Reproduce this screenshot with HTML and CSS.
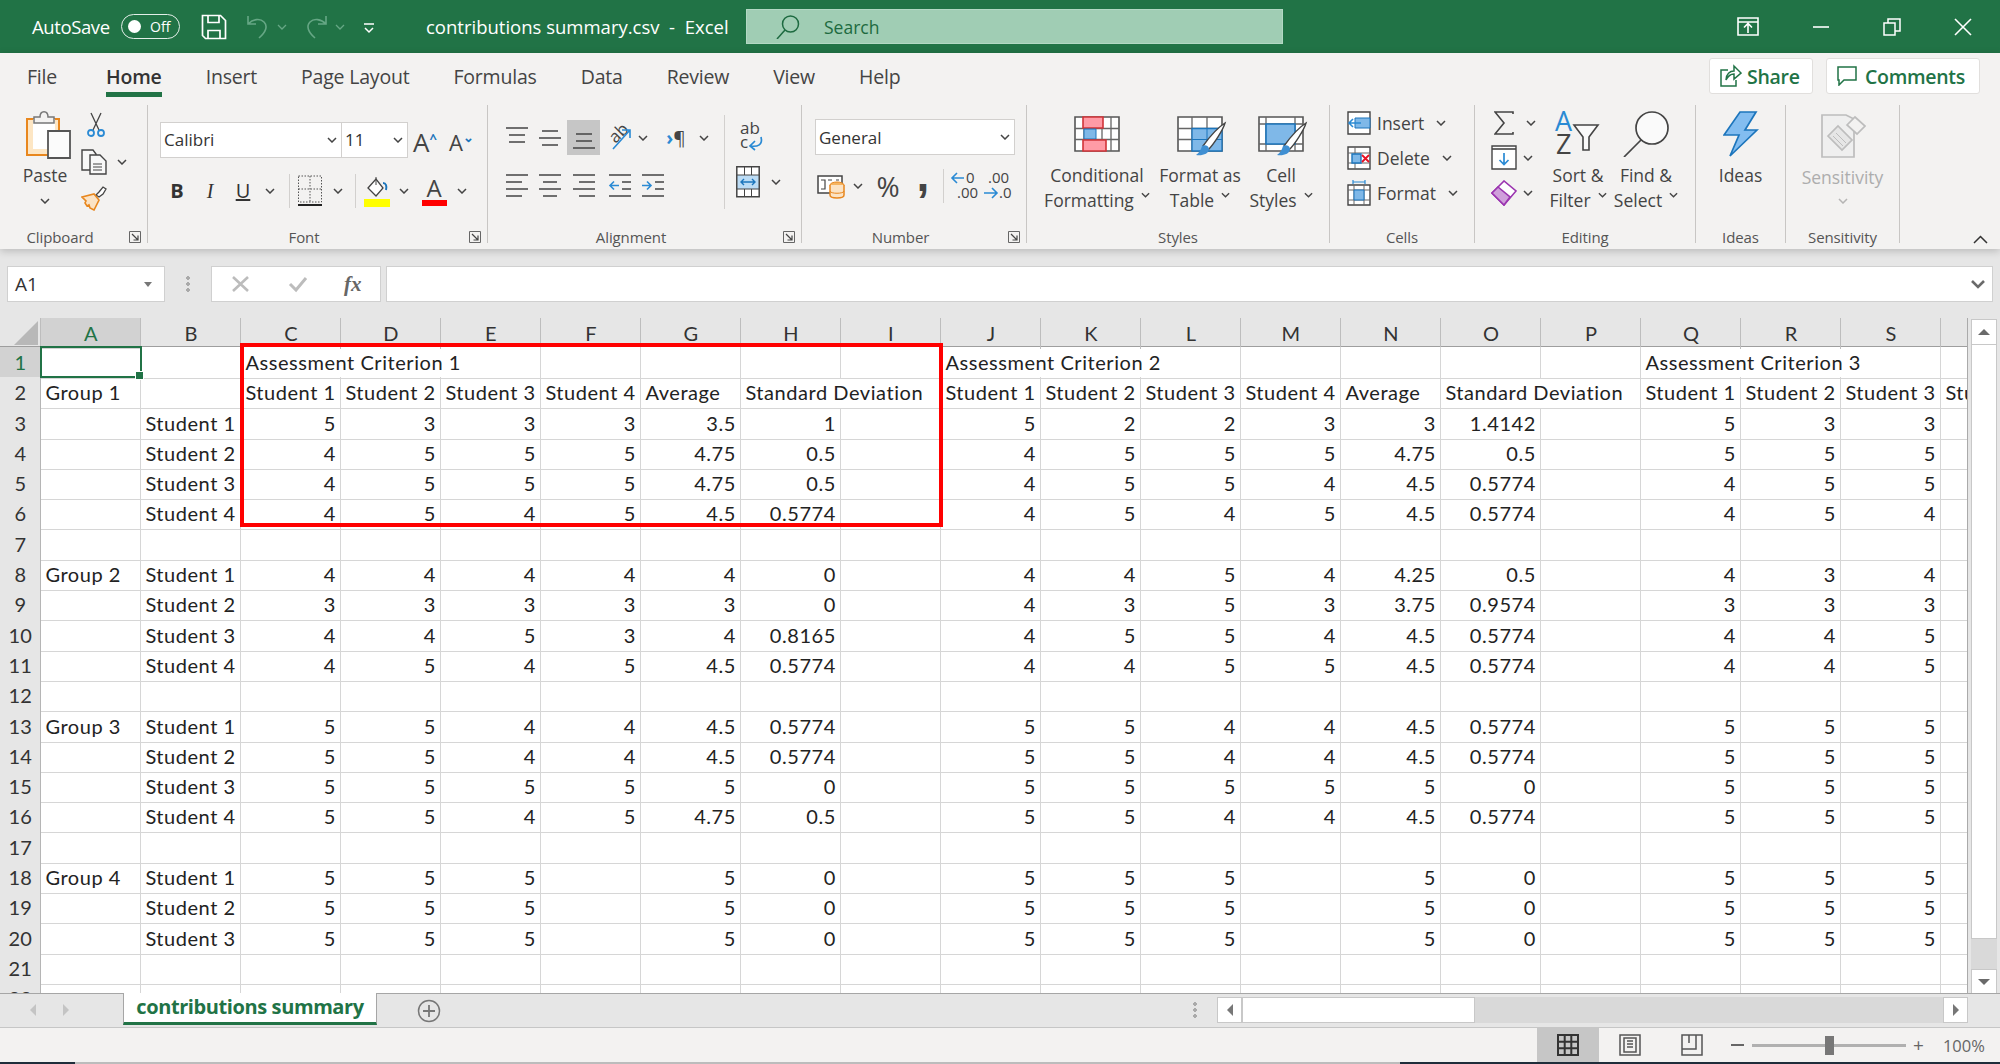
FILE: index.html
```html
<!DOCTYPE html>
<html lang="en">
<head>
<meta charset="utf-8">
<title>contributions summary.csv - Excel</title>
<link rel="stylesheet" href="styles.css">
</head>
<body>
<svg class="defs" width="0" height="0" aria-hidden="true">
  <symbol id="chev" viewBox="0 0 10 6"><path d="M1 1l4 4 4-4" fill="none" stroke="#444" stroke-width="1.5"/></symbol>
  <symbol id="launch" viewBox="0 0 12 12"><path d="M.5.5h11v11h-11z" fill="none" stroke="#666"/><path d="M3 3l6 6M9 4.5V9H4.5" fill="none" stroke="#444" stroke-width="1.2"/></symbol>
  <symbol id="brush" viewBox="0 0 46 46"><path d="M44 12c-2 7-11 21-17 27l-5-4c5-7 14-18 22-23z" fill="#fff" stroke="#444" stroke-width="1.4"/><path d="M15 44c6 1 13-1 13-6 0-3-4-5-7-3-1 4-3 7-6 9z" fill="#3f8fd2"/></symbol>
</svg>

<header class="titlebar">
  <span class="autosave">AutoSave</span>
  <span class="toggle"><i class="toggle-dot"></i><span>Off</span></span>
  <svg class="save" width="26" height="26" viewBox="0 0 26 26" fill="none" stroke="#fff" stroke-width="1.7"><path d="M1.500 1.500h18l5 5v18h-20l-3-3z"/><path d="M7 1.500v7h11v-7M7 24.500v-8h12v8"/></svg>
  <svg class="undo" width="24" height="24" viewBox="0 0 24 24" fill="none" stroke="#66a785" stroke-width="1.6"><path d="M2 1v8h8M2 9c5-5 12-6 16-2s2 10-5 16"/></svg>
  <svg class="tchev" width="10" height="6"><path d="M1 1l4 4 4-4" fill="none" stroke="#66a785" stroke-width="1.3"/></svg>
  <svg class="redo" width="24" height="24" viewBox="0 0 24 24" fill="none" stroke="#66a785" stroke-width="1.6"><path d="M22 1v8h-8M22 9c-5-5-12-6-16-2s-2 10 5 16"/></svg>
  <svg class="tchev" width="10" height="6"><path d="M1 1l4 4 4-4" fill="none" stroke="#66a785" stroke-width="1.3"/></svg>
  <svg class="qat" width="12" height="12" viewBox="0 0 12 12" fill="none" stroke="#fff" stroke-width="1.5"><path d="M1 2h10M2 6l4 4 4-4"/></svg>
  <span class="doc">contributions summary.csv&nbsp; - &nbsp;Excel</span>
  <div class="search">
    <svg width="24" height="24" viewBox="0 0 24 24" fill="none" stroke="#1d6a40" stroke-width="1.5"><circle cx="14.500" cy="9" r="8"/><path d="M9 15L1 24"/></svg>
    <span>Search</span>
  </div>
  <div class="winctl">
    <svg width="22" height="20" viewBox="0 0 22 20" fill="none" stroke="#fff" stroke-width="1.6"><path d="M1 1h20v17H1zM1 5h20M11 16V7M7 10.500l4-4 4 4"/></svg>
    <svg width="18" height="20" viewBox="0 0 18 20" fill="none" stroke="#fff" stroke-width="1.6"><path d="M1 10h16"/></svg>
    <svg width="18" height="20" viewBox="0 0 18 20" fill="none" stroke="#fff" stroke-width="1.5"><path d="M1 6h11v12H1zM5 6V2h12v12h-5"/></svg>
    <svg width="18" height="20" viewBox="0 0 18 20" fill="none" stroke="#fff" stroke-width="1.6"><path d="M1 2l16 16M17 2L1 18"/></svg>
  </div>
</header>

<div class="ribbon">
  <nav class="tabs">
    <span class="tab tab-file">File</span>
    <span class="tab active">Home</span>
    <span class="tab">Insert</span>
    <span class="tab">Page Layout</span>
    <span class="tab">Formulas</span>
    <span class="tab">Data</span>
    <span class="tab">Review</span>
    <span class="tab">View</span>
    <span class="tab">Help</span>
    <div class="actions">
      <button class="act">
        <svg width="22" height="24" viewBox="0 0 22 24" fill="none" stroke="#217346" stroke-width="1.5"><path d="M8 6H1v16h15v-6"/><path d="M6 16c0-6 4-9 8-9V2l7 7-7 6v-5c-4 0-6 2-8 6z"/></svg>
        <span>Share</span>
      </button>
      <button class="act">
        <svg width="20" height="20" viewBox="0 0 20 20" fill="none" stroke="#217346" stroke-width="1.5"><path d="M1 1h18v13H7l-5 5v-5H1z"/></svg>
        <span>Comments</span>
      </button>
    </div>
  </nav>

  <div class="groups">
    <section class="group g-clip">
      <div class="g-body clip-body">
        <div class="paste">
          <svg width="46" height="50" viewBox="0 0 46 50"><path d="M2 9h32v36H2z" fill="#fde6c4" stroke="#e8871e" stroke-width="2"/><path d="M8 9h22v30H8z" fill="#fff"/><path d="M9 13V7h6c0-7 8-7 8 0h6v6z" fill="#f3f2f1" stroke="#777" stroke-width="1.5"/><path d="M23 21h22v27H23z" fill="#fbfbfb" stroke="#555" stroke-width="1.8"/></svg>
          <span>Paste</span>
          <svg class="chev"><use href="#chev"/></svg>
        </div>
        <div class="clip-tools">
          <svg class="cut" width="18" height="26" viewBox="0 0 18 26" fill="none"><path d="M4 1l8 17M14 1L6 18" stroke="#444" stroke-width="1.3"/><circle cx="4" cy="21" r="3" stroke="#2a8ad4" stroke-width="1.8"/><circle cx="14" cy="21" r="3" stroke="#2a8ad4" stroke-width="1.8"/></svg>
          <div class="copy-row">
            <svg width="26" height="26" viewBox="0 0 26 26" fill="#f8f8f8" stroke="#444" stroke-width="1.4"><path d="M1 1h11l3 4v16H1z"/><path d="M9 6h10l6 6v13H9z"/><path d="M12 15h9M12 18h9M12 21h9" stroke-width="1"/></svg>
            <svg class="chev"><use href="#chev"/></svg>
          </div>
          <svg class="painter" width="26" height="25" viewBox="0 0 26 25"><path d="M15 9l3-3 4-5 3 2-3 5-4 3z" fill="#fff" stroke="#444" stroke-width="1.3"/><path d="M1 11l12-3 5 6-5 10-4-2-1-3-2 1-2-3 1-2z" fill="#fbe3c5" stroke="#e8871e" stroke-width="1.6"/></svg>
        </div>
      </div>
      <div class="g-label"><span>Clipboard</span><svg class="launch"><use href="#launch"/></svg></div>
    </section>

    <section class="group g-font">
      <div class="g-body font-body">
        <div class="font-top">
          <div class="combo combo-name"><span>Calibri</span><svg class="chev"><use href="#chev"/></svg></div>
          <div class="combo combo-size"><span>11</span><svg class="chev"><use href="#chev"/></svg></div>
          <span class="grow">A<small>^</small></span>
          <span class="shrink">A<small>⌄</small></span>
        </div>
        <div class="font-row2">
          <b class="fmt">B</b>
          <i class="fmt fmt-i">I</i>
          <u class="fmt">U</u>
          <svg class="chev"><use href="#chev"/></svg>
          <span class="vline"></span>
          <svg width="24" height="32" viewBox="0 0 24 32" fill="none" stroke="#555" stroke-dasharray="1.5 1.5"><path d="M.5 1h23v26h-23zM12 1v26M.5 14h23"/><path d="M0 30h24" stroke="#222" stroke-width="2" stroke-dasharray="none"/></svg>
          <svg class="chev"><use href="#chev"/></svg>
          <span class="vline"></span>
          <svg width="26" height="34" viewBox="0 0 26 34"><path d="M4 14L12 5l7 9-7 8z" fill="#fff" stroke="#444" stroke-width="1.3"/><path d="M12 3v8" stroke="#444"/><path d="M19 9c3 0 4 3 3 7" fill="none" stroke="#1c75bc" stroke-width="2"/><path d="M0 25h26v8H0z" fill="#ffff00"/></svg>
          <svg class="chev"><use href="#chev"/></svg>
          <span class="fontcolor">A</span>
          <svg class="chev"><use href="#chev"/></svg>
        </div>
      </div>
      <div class="g-label"><span>Font</span><svg class="launch"><use href="#launch"/></svg></div>
    </section>

    <section class="group g-align">
      <div class="g-body align-body">
        <div class="al-left">
          <div class="al-row1">
            <svg class="al" width="24" height="24" viewBox="0 0 24 24" stroke="#444" stroke-width="1.6"><path d="M1 2h22M4 9h16M4 16h16"/></svg>
            <svg class="al" width="24" height="24" viewBox="0 0 24 24" stroke="#444" stroke-width="1.6"><path d="M4 5h16M1 12h22M4 19h16"/></svg>
            <span class="al-active"><svg width="24" height="24" viewBox="0 0 24 24" stroke="#444" stroke-width="1.6"><path d="M4 8h16M4 15h16M1 22h22"/></svg></span>
            <svg width="28" height="26" viewBox="0 0 28 26" overflow="visible"><text x="0" y="13" class="ic-text ic-rot">ab</text><path d="M8 24L25 5M17 5h8v8" fill="none" stroke="#2a8ad4" stroke-width="1.6"/></svg>
            <svg class="chev"><use href="#chev"/></svg>
            <i></i>
            <span class="rtl"><em>›</em>¶</span>
            <svg class="chev"><use href="#chev"/></svg>
          </div>
          <div class="al-row2">
            <svg width="24" height="28" viewBox="0 0 24 28" stroke="#444" stroke-width="1.6"><path d="M1 3h22M1 10h16M1 17h22M1 24h16"/></svg>
            <svg width="24" height="28" viewBox="0 0 24 28" stroke="#444" stroke-width="1.6"><path d="M1 3h22M5 10h14M1 17h22M5 24h14"/></svg>
            <svg width="24" height="28" viewBox="0 0 24 28" stroke="#444" stroke-width="1.6"><path d="M1 3h22M7 10h16M1 17h22M7 24h16"/></svg>
            <svg width="24" height="28" viewBox="0 0 24 28" fill="none" stroke="#444" stroke-width="1.6"><path d="M1 3h22M14 10h9M14 17h9M1 24h22"/><path d="M11 13.500H2M6 9.500l-4 4 4 4" stroke="#2a8ad4"/></svg>
            <svg width="24" height="28" viewBox="0 0 24 28" fill="none" stroke="#444" stroke-width="1.6"><path d="M1 3h22M14 10h9M14 17h9M1 24h22"/><path d="M1 13.500h9M6 9.500l4 4-4 4" stroke="#2a8ad4"/></svg>
          </div>
        </div>
        <span class="vline vline-tall"></span>
        <div class="al-right">
          <svg class="wrap" width="26" height="34" viewBox="0 0 26 34" overflow="visible"><text x="2" y="14" class="ic-text">ab</text><text x="2" y="28" class="ic-text">c</text><path d="M23 17c2 8-3 10-11 9M17 21l-5 5 5 4" fill="none" stroke="#2a8ad4" stroke-width="1.7"/></svg>
          <div class="merge">
            <svg width="24" height="32" viewBox="0 0 24 32"><path d="M.8.8h22.400v30H.8z" fill="#fff" stroke="#444" stroke-width="1.5"/><path d="M1 9h22v14H1z" fill="#bcdcf5" stroke="#444" stroke-width="1"/><path d="M5 16h14M8 13l-3 3 3 3M16 13l3 3-3 3" fill="none" stroke="#1c75bc" stroke-width="1.4"/><path d="M8.500 1v8M15.500 1v8M8.500 23v8M15.500 23v8" stroke="#444"/></svg>
            <svg class="chev"><use href="#chev"/></svg>
          </div>
        </div>
      </div>
      <div class="g-label"><span>Alignment</span><svg class="launch"><use href="#launch"/></svg></div>
    </section>

    <section class="group g-num">
      <div class="g-body num-body">
        <div class="combo combo-gen"><span>General</span><svg class="chev"><use href="#chev"/></svg></div>
        <div class="num-row2">
          <svg width="28" height="26" viewBox="0 0 28 26"><path d="M1 3h24v17H1z" fill="#fff" stroke="#444" stroke-width="1.5"/><path d="M4 7h4v9H4M11 7h4M19 7h3" fill="none" stroke="#444" stroke-width="1.2"/><ellipse cx="20" cy="12" rx="7" ry="3" fill="#f5b461" stroke="#e8871e"/><path d="M13 12v10c0 4 14 4 14 0V12" fill="#fbe3c5" stroke="#e8871e" stroke-width="1.5"/><path d="M13 18c0 3 14 3 14 0" fill="none" stroke="#e8871e"/></svg>
          <svg class="chev"><use href="#chev"/></svg>
          <span class="pct">%</span>
          <span class="comma">,</span>
          <span class="vline"></span>
          <svg width="26" height="30" viewBox="0 0 26 30" overflow="visible"><text x="15" y="12" class="ic-num">0</text><text x="6" y="27" class="ic-num">.00</text><path d="M13 7H1M6 2L1 7l5 5" fill="none" stroke="#2a8ad4" stroke-width="1.6"/></svg>
          <svg width="28" height="30" viewBox="0 0 28 30" overflow="visible"><text x="5" y="12" class="ic-num">.00</text><text x="16" y="27" class="ic-num">.0</text><path d="M1 22h12M9 17l5 5-5 5" fill="none" stroke="#2a8ad4" stroke-width="1.6"/></svg>
        </div>
      </div>
      <div class="g-label"><span>Number</span><svg class="launch"><use href="#launch"/></svg></div>
    </section>

    <section class="group g-styles">
      <div class="g-body styles-body">
        <div class="big b-cond">
          <svg width="46" height="46" viewBox="0 0 46 46"><path d="M1 6h44v34H1z" fill="#fff" stroke="#555" stroke-width="1.6"/><path d="M10 6v34M28 6v34M37 6v34M1 17.500h44M1 28.500h44" stroke="#666" stroke-width="1.3"/><path d="M9 6h20v11H9z" fill="#ff9ba6" stroke="#d13438" stroke-width="1.6"/><path d="M10 18h12v10H10z" fill="#7fb8e8" stroke="#1c75bc"/><path d="M9 29h23v11H9z" fill="#ff9ba6" stroke="#d13438" stroke-width="1.6"/></svg>
          <span>Conditional</span>
          <span>Formatting<svg class="chev chev-s"><use href="#chev"/></svg></span>
        </div>
        <div class="big b-table">
          <svg class="ic-shift" width="50" height="46" viewBox="0 0 50 46"><path d="M1 6h44v34H1z" fill="#fff" stroke="#555" stroke-width="1.6"/><path d="M15 6v34M30 6v34M1 17.500h44M1 28.500h44" stroke="#666" stroke-width="1.3"/><path d="M15 17.500h30V40H15z" fill="#7fb8e8" stroke="#1c75bc" stroke-width="1.3"/><path d="M30 17.500V40M15 28.500h30" stroke="#1c75bc"/><use href="#brush" x="4" width="46" height="46"/></svg>
          <span>Format as</span>
          <span>Table<svg class="chev chev-s"><use href="#chev"/></svg></span>
        </div>
        <div class="big b-cell">
          <svg class="ic-shift" width="50" height="46" viewBox="0 0 50 46"><path d="M1 6h44v34H1z" fill="#fff" stroke="#555" stroke-width="1.6"/><path d="M8 6v34M37 6v34M1 13h44M1 33h44" stroke="#666" stroke-width="1.3"/><path d="M8 13h29v20H8z" fill="#7fb8e8" stroke="#1c75bc" stroke-width="1.6"/><use href="#brush" x="4" width="46" height="46"/></svg>
          <span>Cell</span>
          <span>Styles<svg class="chev chev-s"><use href="#chev"/></svg></span>
        </div>
      </div>
      <div class="g-label g-label-plain"><span>Styles</span></div>
    </section>

    <section class="group g-cells">
      <div class="g-body cells-body">
        <div class="cellrow">
          <svg width="24" height="24" viewBox="0 0 24 24"><path d="M1 1h22v22H1z" fill="#fff" stroke="#444" stroke-width="1.4"/><path d="M8 7h15v10H8z" fill="#7fb8e8" stroke="#1c75bc"/><path d="M14 12H2M6 8l-4 4 4 4" fill="none" stroke="#2a8ad4" stroke-width="1.6"/></svg>
          <span>Insert</span><svg class="chev"><use href="#chev"/></svg>
        </div>
        <div class="cellrow">
          <svg width="24" height="24" viewBox="0 0 24 24"><path d="M1 1h22v22H1z" fill="#fff" stroke="#444" stroke-width="1.4"/><path d="M1 7h22M1 17h22M8 1v22" stroke="#666"/><path d="M5 8h9v9H5z" fill="#7fb8e8" stroke="#1c75bc" stroke-width="1.4"/><path d="M15 9l7 7M22 9l-7 7" stroke="#e81123" stroke-width="1.8"/></svg>
          <span>Delete</span><svg class="chev"><use href="#chev"/></svg>
        </div>
        <div class="cellrow">
          <svg width="24" height="26" viewBox="0 0 24 26"><path d="M1 5h22v20H1z" fill="#fff" stroke="#444" stroke-width="1.4"/><path d="M1 10h22M1 20h22M7 5v20M17 5v20" stroke="#666"/><path d="M7 10h10v10H7z" fill="#7fb8e8" stroke="#1c75bc"/><path d="M6 2h12M6 0v4M18 0v4" stroke="#2a8ad4" stroke-width="1.2"/></svg>
          <span>Format</span><svg class="chev"><use href="#chev"/></svg>
        </div>
      </div>
      <div class="g-label g-label-plain"><span>Cells</span></div>
    </section>

    <section class="group g-edit">
      <div class="g-body edit-body">
        <div class="edit-tools">
          <div class="editrow er-sum">
            <svg width="20" height="24" viewBox="0 0 20 24" fill="none" stroke="#444" stroke-width="1.6"><path d="M19 3V1H1l9 11-9 11h18v-2"/></svg>
            <svg class="chev"><use href="#chev"/></svg>
          </div>
          <div class="editrow">
            <svg width="26" height="25" viewBox="0 0 26 25"><path d="M1 1h24v23H1z" fill="#fff" stroke="#444" stroke-width="1.4"/><path d="M1 4h24" stroke="#444" stroke-width="1.6"/><path d="M13 8v11M8.500 15l4.500 4.500 4.500-4.500" fill="none" stroke="#2a8ad4" stroke-width="1.7"/></svg>
            <svg class="chev"><use href="#chev"/></svg>
          </div>
          <div class="editrow">
            <svg width="26" height="26" viewBox="0 0 26 26"><path d="M1 13L13 1l12 10L13 25z" fill="#fff" stroke="#9b35b0" stroke-width="1.6"/><path d="M1 13l6-6 12 10-6 8z" fill="#cf9fdb" stroke="#9b35b0" stroke-width="1.6"/></svg>
            <svg class="chev"><use href="#chev"/></svg>
          </div>
        </div>
        <div class="big b-sort">
          <svg width="46" height="46" viewBox="0 0 46 46" overflow="visible"><text x="0" y="20" class="ic-az ic-blue">A</text><text x="1" y="43" class="ic-az">Z</text><path d="M19 14h24l-9 12v13h-6V26z" fill="#fafafa" stroke="#444" stroke-width="1.6"/></svg>
          <span>Sort &amp;</span>
          <span>Filter<svg class="chev chev-s"><use href="#chev"/></svg></span>
        </div>
        <div class="big b-find">
          <svg width="46" height="46" viewBox="0 0 46 46"><circle cx="29" cy="17" r="16" fill="#fafafa" stroke="#444" stroke-width="1.7"/><path d="M18 29L1 46" stroke="#444" stroke-width="1.7"/></svg>
          <span>Find &amp;</span>
          <span>Select<svg class="chev chev-s"><use href="#chev"/></svg></span>
        </div>
      </div>
      <div class="g-label g-label-plain"><span>Editing</span></div>
    </section>

    <section class="group g-ideas">
      <div class="g-body">
        <div class="big">
          <svg width="36" height="46" viewBox="0 0 36 46"><path d="M17 1h16L22 19h12L7 45l9-21H1z" fill="#83bdf0" stroke="#1c75bc" stroke-width="1.7"/></svg>
          <span>Ideas</span>
        </div>
      </div>
      <div class="g-label g-label-plain"><span>Ideas</span></div>
    </section>

    <section class="group g-sens">
      <div class="g-body">
        <div class="big big-off">
          <svg width="46" height="48" viewBox="0 0 46 48" fill="#e6e6e6" stroke="#bdbdbd" stroke-width="1.7"><path d="M2 4h24l8 4v38H2z" fill="#efefef"/><path d="M8 25l10-10 14 14-10 10z"/><path d="M27 14l8-8 10 9-8 8z" fill="#f3f2f1"/><path d="M13 25l10 10M16 22l10 10" stroke-width="1"/></svg>
          <span>Sensitivity</span>
          <svg class="chev chev-off"><use href="#chev"/></svg>
        </div>
      </div>
      <div class="g-label g-label-plain"><span>Sensitivity</span></div>
    </section>

    <div class="collapse">
      <svg width="15" height="9" viewBox="0 0 15 9" fill="none" stroke="#333" stroke-width="1.5"><path d="M1 8l6.500-6.500L14 8"/></svg>
    </div>
  </div>
</div>

<div class="formulabar">
  <div class="namebox"><span>A1</span><i class="caret-down"></i></div>
  <span class="dots"></span>
  <div class="fx-box">
    <svg width="20" height="18" viewBox="0 0 20 18" fill="none" stroke="#bcbcbc" stroke-width="2.600"><path d="M2 2l15 14M17 2L2 16"/></svg>
    <svg width="20" height="18" viewBox="0 0 20 18" fill="none" stroke="#bcbcbc" stroke-width="3"><path d="M2 9l6 6L18 3"/></svg>
    <span class="fx">fx</span>
  </div>
  <div class="fx-input">
    <svg width="14" height="9" viewBox="0 0 14 9" fill="none" stroke="#6a6a6a" stroke-width="2.600"><path d="M1 1l6 6 6-6"/></svg>
  </div>
</div>

<div class="gridarea">
  <div class="sheet">
    <div class="colhead">
      <span class="corner"><i></i></span>
      <span class="sel">A</span><span>B</span><span>C</span><span>D</span><span>E</span><span>F</span><span>G</span><span>H</span><span>I</span><span>J</span><span>K</span><span>L</span><span>M</span><span>N</span><span>O</span><span>P</span><span>Q</span><span>R</span><span>S</span><span></span>
    </div>
    <div class="rows">
      <div class="row"><b class="sel">1</b><span></span><span></span><span class="ov">Assessment Criterion 1</span><span class="ov"></span><span></span><span></span><span></span><span></span><span></span><span class="ov">Assessment Criterion 2</span><span class="ov"></span><span></span><span></span><span></span><span></span><span></span><span class="ov">Assessment Criterion 3</span><span class="ov"></span><span></span><span></span></div>
      <div class="row"><b>2</b><span>Group 1</span><span></span><span>Student 1</span><span>Student 2</span><span>Student 3</span><span>Student 4</span><span>Average</span><span class="ov">Standard Deviation</span><span></span><span>Student 1</span><span>Student 2</span><span>Student 3</span><span>Student 4</span><span>Average</span><span class="ov">Standard Deviation</span><span></span><span>Student 1</span><span>Student 2</span><span>Student 3</span><span>Student 4</span></div>
      <div class="row"><b>3</b><span></span><span>Student 1</span><span class="n">5</span><span class="n">3</span><span class="n">3</span><span class="n">3</span><span class="n">3.5</span><span class="n">1</span><span></span><span class="n">5</span><span class="n">2</span><span class="n">2</span><span class="n">3</span><span class="n">3</span><span class="n">1.4142</span><span></span><span class="n">5</span><span class="n">3</span><span class="n">3</span><span></span></div>
      <div class="row"><b>4</b><span></span><span>Student 2</span><span class="n">4</span><span class="n">5</span><span class="n">5</span><span class="n">5</span><span class="n">4.75</span><span class="n">0.5</span><span></span><span class="n">4</span><span class="n">5</span><span class="n">5</span><span class="n">5</span><span class="n">4.75</span><span class="n">0.5</span><span></span><span class="n">5</span><span class="n">5</span><span class="n">5</span><span></span></div>
      <div class="row"><b>5</b><span></span><span>Student 3</span><span class="n">4</span><span class="n">5</span><span class="n">5</span><span class="n">5</span><span class="n">4.75</span><span class="n">0.5</span><span></span><span class="n">4</span><span class="n">5</span><span class="n">5</span><span class="n">4</span><span class="n">4.5</span><span class="n">0.5774</span><span></span><span class="n">4</span><span class="n">5</span><span class="n">5</span><span></span></div>
      <div class="row"><b>6</b><span></span><span>Student 4</span><span class="n">4</span><span class="n">5</span><span class="n">4</span><span class="n">5</span><span class="n">4.5</span><span class="n">0.5774</span><span></span><span class="n">4</span><span class="n">5</span><span class="n">4</span><span class="n">5</span><span class="n">4.5</span><span class="n">0.5774</span><span></span><span class="n">4</span><span class="n">5</span><span class="n">4</span><span></span></div>
      <div class="row"><b>7</b><span></span><span></span><span></span><span></span><span></span><span></span><span></span><span></span><span></span><span></span><span></span><span></span><span></span><span></span><span></span><span></span><span></span><span></span><span></span><span></span></div>
      <div class="row"><b>8</b><span>Group 2</span><span>Student 1</span><span class="n">4</span><span class="n">4</span><span class="n">4</span><span class="n">4</span><span class="n">4</span><span class="n">0</span><span></span><span class="n">4</span><span class="n">4</span><span class="n">5</span><span class="n">4</span><span class="n">4.25</span><span class="n">0.5</span><span></span><span class="n">4</span><span class="n">3</span><span class="n">4</span><span></span></div>
      <div class="row"><b>9</b><span></span><span>Student 2</span><span class="n">3</span><span class="n">3</span><span class="n">3</span><span class="n">3</span><span class="n">3</span><span class="n">0</span><span></span><span class="n">4</span><span class="n">3</span><span class="n">5</span><span class="n">3</span><span class="n">3.75</span><span class="n">0.9574</span><span></span><span class="n">3</span><span class="n">3</span><span class="n">3</span><span></span></div>
      <div class="row"><b>10</b><span></span><span>Student 3</span><span class="n">4</span><span class="n">4</span><span class="n">5</span><span class="n">3</span><span class="n">4</span><span class="n">0.8165</span><span></span><span class="n">4</span><span class="n">5</span><span class="n">5</span><span class="n">4</span><span class="n">4.5</span><span class="n">0.5774</span><span></span><span class="n">4</span><span class="n">4</span><span class="n">5</span><span></span></div>
      <div class="row"><b>11</b><span></span><span>Student 4</span><span class="n">4</span><span class="n">5</span><span class="n">4</span><span class="n">5</span><span class="n">4.5</span><span class="n">0.5774</span><span></span><span class="n">4</span><span class="n">4</span><span class="n">5</span><span class="n">5</span><span class="n">4.5</span><span class="n">0.5774</span><span></span><span class="n">4</span><span class="n">4</span><span class="n">5</span><span></span></div>
      <div class="row"><b>12</b><span></span><span></span><span></span><span></span><span></span><span></span><span></span><span></span><span></span><span></span><span></span><span></span><span></span><span></span><span></span><span></span><span></span><span></span><span></span><span></span></div>
      <div class="row"><b>13</b><span>Group 3</span><span>Student 1</span><span class="n">5</span><span class="n">5</span><span class="n">4</span><span class="n">4</span><span class="n">4.5</span><span class="n">0.5774</span><span></span><span class="n">5</span><span class="n">5</span><span class="n">4</span><span class="n">4</span><span class="n">4.5</span><span class="n">0.5774</span><span></span><span class="n">5</span><span class="n">5</span><span class="n">5</span><span></span></div>
      <div class="row"><b>14</b><span></span><span>Student 2</span><span class="n">5</span><span class="n">5</span><span class="n">4</span><span class="n">4</span><span class="n">4.5</span><span class="n">0.5774</span><span></span><span class="n">5</span><span class="n">5</span><span class="n">4</span><span class="n">4</span><span class="n">4.5</span><span class="n">0.5774</span><span></span><span class="n">5</span><span class="n">5</span><span class="n">5</span><span></span></div>
      <div class="row"><b>15</b><span></span><span>Student 3</span><span class="n">5</span><span class="n">5</span><span class="n">5</span><span class="n">5</span><span class="n">5</span><span class="n">0</span><span></span><span class="n">5</span><span class="n">5</span><span class="n">5</span><span class="n">5</span><span class="n">5</span><span class="n">0</span><span></span><span class="n">5</span><span class="n">5</span><span class="n">5</span><span></span></div>
      <div class="row"><b>16</b><span></span><span>Student 4</span><span class="n">5</span><span class="n">5</span><span class="n">4</span><span class="n">5</span><span class="n">4.75</span><span class="n">0.5</span><span></span><span class="n">5</span><span class="n">5</span><span class="n">4</span><span class="n">4</span><span class="n">4.5</span><span class="n">0.5774</span><span></span><span class="n">5</span><span class="n">5</span><span class="n">5</span><span></span></div>
      <div class="row"><b>17</b><span></span><span></span><span></span><span></span><span></span><span></span><span></span><span></span><span></span><span></span><span></span><span></span><span></span><span></span><span></span><span></span><span></span><span></span><span></span><span></span></div>
      <div class="row"><b>18</b><span>Group 4</span><span>Student 1</span><span class="n">5</span><span class="n">5</span><span class="n">5</span><span></span><span class="n">5</span><span class="n">0</span><span></span><span class="n">5</span><span class="n">5</span><span class="n">5</span><span></span><span class="n">5</span><span class="n">0</span><span></span><span class="n">5</span><span class="n">5</span><span class="n">5</span><span></span></div>
      <div class="row"><b>19</b><span></span><span>Student 2</span><span class="n">5</span><span class="n">5</span><span class="n">5</span><span></span><span class="n">5</span><span class="n">0</span><span></span><span class="n">5</span><span class="n">5</span><span class="n">5</span><span></span><span class="n">5</span><span class="n">0</span><span></span><span class="n">5</span><span class="n">5</span><span class="n">5</span><span></span></div>
      <div class="row"><b>20</b><span></span><span>Student 3</span><span class="n">5</span><span class="n">5</span><span class="n">5</span><span></span><span class="n">5</span><span class="n">0</span><span></span><span class="n">5</span><span class="n">5</span><span class="n">5</span><span></span><span class="n">5</span><span class="n">0</span><span></span><span class="n">5</span><span class="n">5</span><span class="n">5</span><span></span></div>
      <div class="row"><b>21</b><span></span><span></span><span></span><span></span><span></span><span></span><span></span><span></span><span></span><span></span><span></span><span></span><span></span><span></span><span></span><span></span><span></span><span></span><span></span><span></span></div>
      <div class="row"><b>22</b><span></span><span></span><span></span><span></span><span></span><span></span><span></span><span></span><span></span><span></span><span></span><span></span><span></span><span></span><span></span><span></span><span></span><span></span><span></span><span></span></div>
    </div>
    <div class="active-cell"></div>
    <div class="redbox"></div>
  </div>
  <div class="vscroll">
    <span class="sb-btn"><i class="caret-up"></i></span>
    <span class="sb-thumb"></span>
    <span class="sb-track"></span>
    <span class="sb-btn"><i class="caret-down"></i></span>
  </div>
</div>

<div class="sheetbar">
  <div class="navs"><i class="nav-l"></i><i class="nav-r"></i></div>
  <div class="sheettab">contributions summary</div>
  <svg class="addsheet" width="24" height="24" viewBox="0 0 24 24" fill="none" stroke="#777" stroke-width="1.500"><circle cx="12" cy="12" r="10.500"/><path d="M12 6v12M6 12h12" stroke-width="1.800"/></svg>
  <span class="dots dots-sm"></span>
  <div class="hscroll">
    <span class="hs-btn"><i class="nav-l nav-dark"></i></span>
    <span class="hs-thumb"></span>
    <span class="hs-track"></span>
    <span class="hs-btn"><i class="nav-r nav-dark"></i></span>
  </div>
</div>

<footer class="status">
  <span class="view on"><svg width="22" height="22" viewBox="0 0 22 22" fill="none" stroke="#333" stroke-width="2"><path d="M1 1h20v20H1zM1 7.700h20M1 14.300h20M7.700 1v20M14.300 1v20"/></svg></span>
  <span class="view"><svg width="22" height="22" viewBox="0 0 22 22" fill="none" stroke="#555" stroke-width="1.500"><path d="M1 1h20v20H1z"/><path d="M5 4h12v14H5z"/><path d="M8 7h6M8 10h6M8 13h6"/></svg></span>
  <span class="view"><svg width="22" height="22" viewBox="0 0 22 22" fill="none" stroke="#555" stroke-width="1.500"><path d="M1 1h20v20H1zM1 15h14V1M8 1v8M15 9"/></svg></span>
  <div class="zoom">
    <i class="z-minus"></i>
    <span class="z-track"><i class="z-thumb"></i></span>
    <span class="z-plus">+</span>
    <span class="z-val">100%</span>
  </div>
</footer>
<div class="edge"></div>
</body>
</html>
```

FILE: styles.css
```css
* { box-sizing: border-box; }
html, body { margin: 0; padding: 0; }
body {
  width: 2000px; height: 1064px; overflow: hidden;
  display: flex; flex-direction: column;
  background: #e6e6e6; color: #333;
  font-family: "Open Sans", "Noto Sans", sans-serif;
}
.defs { position: absolute; }
svg { display: block; flex: none; }
.chev { width: 10px; height: 6px; }
.chev-s { display: inline-block; width: 9px; height: 6px; margin-left: 7px; vertical-align: 3px; }

/* title bar */
.titlebar {
  height: 53px; flex: none; background: #217346; color: #fff;
  display: flex; align-items: center; padding-left: 32px;
  font-size: 18.5px;
}
.autosave { width: 89px; letter-spacing: -.4px; }
.toggle {
  width: 59px; height: 25px; border: 1.5px solid #e3eee8; border-radius: 13px;
  display: flex; align-items: center; padding-left: 6px; gap: 9px; font-size: 14px;
}
.toggle-dot { width: 13px; height: 13px; border-radius: 50%; background: #fff; }
.save { margin-left: 21px; }
.undo { margin-left: 19px; }
.tchev { margin-left: 7px; }
.redo { margin-left: 17px; }
.qat { margin-left: 18px; margin-top: 2px; }
.doc { margin-left: 51px; width: 320px; white-space: nowrap; }
.search {
  width: 537px; height: 35px; background: #a0cdb4; color: #1d6a40;
  display: flex; align-items: center; gap: 24px; padding-left: 29px;
  font-size: 17.5px; border: 1px solid #b3d8c4;
}
.winctl { margin-left: auto; display: flex; align-items: center; width: 263px; gap: 53px; }

/* ribbon */
.ribbon { height: 196px; flex: none; background: #f3f2f1; box-shadow: 0 2px 8px rgba(0,0,0,.2); position: relative; z-index: 2; }
.tabs { height: 47px; display: flex; align-items: flex-start; padding-left: 27px; gap: 44px; font-size: 19.5px; color: #444; }
.tab { height: 44px; padding-top: 10px; line-height: 28px; border-bottom: 5px solid transparent; letter-spacing: -.2px; white-space: nowrap; }
.tab-file { margin-right: 5px; }
.tab.active { border-bottom-color: #217346; font-weight: 600; color: #333; }
.actions { margin-left: auto; display: flex; gap: 13px; padding: 5px 20px 0 0; }
.act {
  height: 36px; background: #fff; border: 1px solid #e1dfdd; border-radius: 3px; color: #217346;
  font: 600 19.5px "Open Sans", sans-serif; letter-spacing: -.3px;
  display: flex; align-items: center; gap: 8px; padding: 0 10px; white-space: nowrap;
}
.act:first-child { width: 104px; gap: 5px; }
.act:last-child { width: 154px; }

.groups { height: 138px; margin-top: 5px; display: flex; }
.group { display: flex; flex-direction: column; border-right: 1px solid #c8c6c4; height: 138px; flex: none; }
.g-body { height: 117px; font-size: 17.5px; color: #444; flex: none; }
.g-label { height: 21px; margin-top: 4px; flex: none; display: flex; align-items: center; font-size: 15px; color: #555; letter-spacing: -.1px; white-space: nowrap; }
.g-label span { flex: 1; text-align: center; }
.launch { width: 12px; height: 12px; margin: 0 6px 0 9px; }
.g-clip { width: 148px; }
.g-font { width: 340px; }
.g-align { width: 314px; }
.g-num { width: 225px; }
.g-styles { width: 303px; }
.g-cells { width: 145px; }
.g-edit { width: 221px; }
.g-ideas { width: 90px; }
.g-sens { width: 114px; }
.collapse { flex: 1; display: flex; justify-content: flex-end; align-items: flex-end; padding: 0 12px 0 0; height: 139px; }

/* clipboard */
.clip-body { display: flex; padding-left: 20px; }
.paste { width: 50px; display: flex; flex-direction: column; align-items: center; padding-top: 5px; }
.paste svg:first-child { margin-left: 6px; }
.paste span { margin-top: 3px; line-height: 24px; }
.paste .chev { margin-top: 11px; }
.clip-tools { padding-left: 11px; display: flex; flex-direction: column; }
.cut { margin: 7px 0 0 6px; }
.copy-row { display: flex; align-items: center; gap: 10px; margin-top: 11px; }
.painter { margin-top: 11px; }

/* font */
.font-body { padding: 14px 0 0 12px; }
.font-top { display: flex; align-items: center; }
.combo {
  height: 36px; background: #fff; border: 1px solid #d2d0ce; display: flex; align-items: center;
  justify-content: space-between; padding: 0 4px 0 3px; font-size: 17px; color: #333;
}
.combo-name { width: 182px; }
.combo-size { width: 67px; margin-left: -1px; }
.grow, .shrink { font-size: 26px; line-height: 36px; color: #444; }
.grow { margin-left: 5px; width: 36px; }
.shrink { font-size: 22px; width: 30px; }
.grow small, .shrink small { font-size: 13px; color: #1c75bc; font-weight: 700; vertical-align: 9px; }
.font-row2 {
  display: grid; grid-template-columns: 34px 32px 34px 20px 18px 24px 32px 2px 42px 12px 48px 8px;
  justify-items: center; align-items: center; height: 34px; margin-top: 14px;
}
.fmt { font-size: 20px; color: #333; line-height: 1; }
.fmt-i { font-family: "Liberation Serif", serif; }
.vline { width: 1px; height: 34px; background: #d2d0ce; display: block; }
.fontcolor { width: 25px; font-size: 24px; line-height: 24px; text-align: center; border-bottom: 6px solid #ff0000; color: #444; height: 30px; }

/* alignment */
.align-body { display: flex; }
.al-left { width: 236px; padding: 15px 0 0 12px; }
.al-row1 {
  display: grid; grid-template-columns: 33px 34px 33px 38px 10px 6px 44px 12px;
  justify-items: center; align-items: center; height: 35px;
}
.al-active { width: 33px; height: 35px; background: #c6c6c6; display: flex; align-items: center; justify-content: center; }
.rtl { font-size: 19px; color: #444; }
.rtl em { color: #2a8ad4; font-style: normal; font-weight: 700; }
.al-row2 {
  display: grid; grid-template-columns: 33px 34px 34px 38px 28px;
  justify-items: center; align-items: center; height: 35px; margin-top: 13px;
}
.vline-tall { height: 94px; margin-top: 10px; }
.al-right { padding: 15px 0 0 11px; }
.wrap { margin-left: 2px; }
.merge { display: flex; align-items: center; gap: 11px; margin-top: 12px; }
.ic-text { font: 17px "Open Sans", sans-serif; fill: #444; }
.ic-rot { transform: translate(3px, 1px) rotate(-45deg); transform-box: fill-box; transform-origin: center; }
.ic-num { font: 15px "Open Sans", sans-serif; fill: #444; }
.ic-az { font: 27px "Open Sans", sans-serif; fill: #444; }
.ic-blue { fill: #2a8ad4; }

/* number */
.num-body { padding: 14px 0 0 13px; }
.combo-gen { width: 200px; }
.num-row2 {
  display: grid; grid-template-columns: 32px 22px 38px 32px 8px 34px 32px;
  justify-items: center; align-items: center; height: 34px; margin-top: 14px;
}
.pct { font-size: 28px; line-height: 34px; color: #444; }
.comma { font: 700 46px/34px "Liberation Sans", sans-serif; color: #444; margin-top: -22px; }

/* big buttons */
.big { display: flex; flex-direction: column; align-items: center; padding-top: 6px; line-height: 25px; white-space: nowrap; }
.big svg:first-child { margin-bottom: 6px; }
.big svg.ic-shift { margin-left: 4px; }
.styles-body { display: flex; padding-left: 10px; }
.b-cond { width: 120px; }
.b-table { width: 86px; }
.b-cell { width: 76px; }
.big-off { color: #adadad; }
.chev-off { opacity: .35; margin-top: 8px; }

/* cells */
.cellrow { height: 35px; display: flex; align-items: center; padding-left: 17px; }
.cellrow span { margin-left: 6px; }
.cellrow .chev { margin-left: 12px; }

/* editing */
.edit-body { display: flex; padding-left: 15px; }
.edit-tools { width: 50px; }
.editrow { height: 35px; display: flex; align-items: center; gap: 6px; padding-left: 1px; }
.er-sum { padding-left: 4px; gap: 12px; }
.b-sort { width: 76px; }
.b-find { width: 60px; }

/* formula bar */
.formulabar { height: 69px; flex: none; display: flex; padding: 17px 7px 0; align-items: flex-start; }
.namebox {
  width: 158px; height: 36px; background: #fff; border: 1px solid #d0d0d0; display: flex; align-items: center;
  justify-content: space-between; padding: 0 12px 0 7px; font-size: 19px; color: #333;
}
.namebox .caret-down { border-width: 5px 4px 0; border-top-color: #777; }
.dots { width: 4px; height: 18px; margin: 9px 21px 0 21px; background: radial-gradient(circle, #aaa 1.6px, transparent 2px) 0 0 / 4px 6px; }
.fx-box {
  width: 170px; height: 36px; background: #fff; border: 1px solid #d0d0d0; display: flex; align-items: center;
  padding-left: 19px; gap: 37px;
}
.fx { font: italic 700 21px "Liberation Serif", serif; color: #666; margin-left: -1px; }
.fx-input {
  flex: 1; height: 36px; margin-left: 5px; background: #fff; border: 1px solid #d0d0d0;
  display: flex; align-items: center; justify-content: flex-end; padding-right: 7px;
}
.caret-down, .caret-up { display: block; width: 0; height: 0; border: 6px solid transparent; }
.caret-down { border-top: 6px solid #6a6a6a; border-bottom: 0; }
.caret-up { border-bottom: 6px solid #6a6a6a; border-top: 0; }

/* grid */
.gridarea { height: 675px; flex: none; display: flex; }
.sheet { width: 1968px; height: 675px; overflow: hidden; position: relative; border-right: 1px solid #aaa; background: #fff; }
.colhead {
  height: 29px; display: grid; grid-template-columns: 41.4px repeat(20, 100px);
  background: #e6e6e6; border-bottom: 1px solid #9e9e9e;
  font: 20px/31px "Lato", "Open Sans", sans-serif; text-align: center; color: #333;
}
.colhead span { border-right: 1px solid #bdbdbd; }
.colhead .sel { background: #d2d2d2; color: #217346; }
.corner { display: block; }
.corner i { display: block; width: 0; height: 0; border-style: solid; border-width: 0 0 24px 24px; border-color: transparent transparent #b8b8b8 transparent; margin: 3px 0 0 14px; }
.rows { font: 20px/31px "Lato", "Open Sans", sans-serif; color: #222; letter-spacing: .55px; }
.row { height: 30.3px; display: grid; grid-template-columns: 41.4px repeat(20, 100px); }
.row b {
  background: #e6e6e6; font-weight: 400; text-align: center; color: #333; letter-spacing: 0;
  border-bottom: 1px solid #c4c4c4; border-right: 1px solid #b5b5b5;
}
.row b.sel { background: #d2d2d2; color: #217346; }
.row span {
  border-right: 1px solid #d6d6d6; border-bottom: 1px solid #d6d6d6;
  padding: 0 4px; white-space: nowrap;
}
.row span.n { text-align: right; padding-right: 4.5px; }
.row span.ov { border-right-color: transparent; }
.active-cell { position: absolute; left: 40px; top: 28px; width: 102px; height: 32px; border: 2px solid #217346; }
.active-cell::after { content: ""; position: absolute; right: -4px; bottom: -4px; width: 7px; height: 7px; background: #217346; border: 1px solid #fff; }
.redbox { position: absolute; left: 240px; top: 25px; width: 703px; height: 184px; border: 4.4px solid #ff0000; }

/* scrollbars */
.vscroll { width: 32px; height: 675px; padding: 1px 3px 0; display: flex; flex-direction: column; }
.sb-btn { height: 26px; flex: none; background: #fff; border: 1px solid #c8c8c8; display: flex; align-items: center; justify-content: center; }
.sb-thumb { height: 594px; flex: none; background: #fff; border: 1px solid #c8c8c8; border-top: 0; }
.sb-track { height: 30px; flex: none; background: #d9d9d9; }
.sheetbar {
  height: 35px; flex: none; display: flex; background: #e6e6e6;
  border-top: 1px solid #a6a6a6; border-bottom: 1px solid #c6c6c6;
}
.navs { width: 123px; display: flex; gap: 27px; padding: 10px 0 0 30px; }
.nav-l, .nav-r { display: block; width: 0; height: 0; border: 6px solid transparent; border-width: 6.500px 6px; }
.nav-l { border-right-color: #c4c4c4; border-left-width: 0; }
.nav-r { border-left-color: #c4c4c4; border-right-width: 0; }
.nav-dark.nav-l { border-right-color: #777; }
.nav-dark.nav-r { border-left-color: #777; }
.sheettab {
  width: 254px; height: 32px; margin-top: -1px; background: #fff; color: #217346;
  border: 1px solid #a6a6a6; border-top: 0; border-bottom: 3px solid #217346;
  font: 700 20px/28px "Open Sans", sans-serif; text-align: center; letter-spacing: -.4px; white-space: nowrap;
}
.addsheet { margin: 5px 0 0 40px; }
.dots-sm { margin: 7px 0 0 752px; }
.hscroll { width: 751px; height: 26px; margin: 3px 0 0 20px; display: flex; background: #d9d9d9; }
.hs-btn { width: 25px; background: #fff; border: 1px solid #c8c8c8; display: flex; align-items: center; justify-content: center; flex: none; }
.hs-thumb { width: 233px; background: #fff; border: 1px solid #c8c8c8; flex: none; }
.hs-track { flex: 1; }

/* status */
.status { height: 34px; flex: none; background: #f3f2f1; display: flex; align-items: center; padding-left: 1537px; }
.view { width: 62px; height: 34px; display: flex; align-items: center; justify-content: center; }
.view.on { background: #c6c6c6; }
.zoom { display: flex; align-items: center; margin-left: 8px; color: #666; }
.z-minus { width: 13px; height: 2px; background: #666; }
.z-track { width: 154px; height: 3px; background: #b0b0b0; margin-left: 8px; display: block; position: relative; }
.z-thumb { position: absolute; left: 73px; top: -8px; width: 9px; height: 19px; background: #777; }
.z-plus { font-size: 19px; margin-left: 7px; line-height: 1; }
.z-val { font-size: 16.5px; margin-left: 19px; }
.edge { height: 2px; flex: none; background: linear-gradient(90deg, #1f2d3a 0 75px, #bcbcbc 75px 1400px, #1f2d3a 1400px); }
```
